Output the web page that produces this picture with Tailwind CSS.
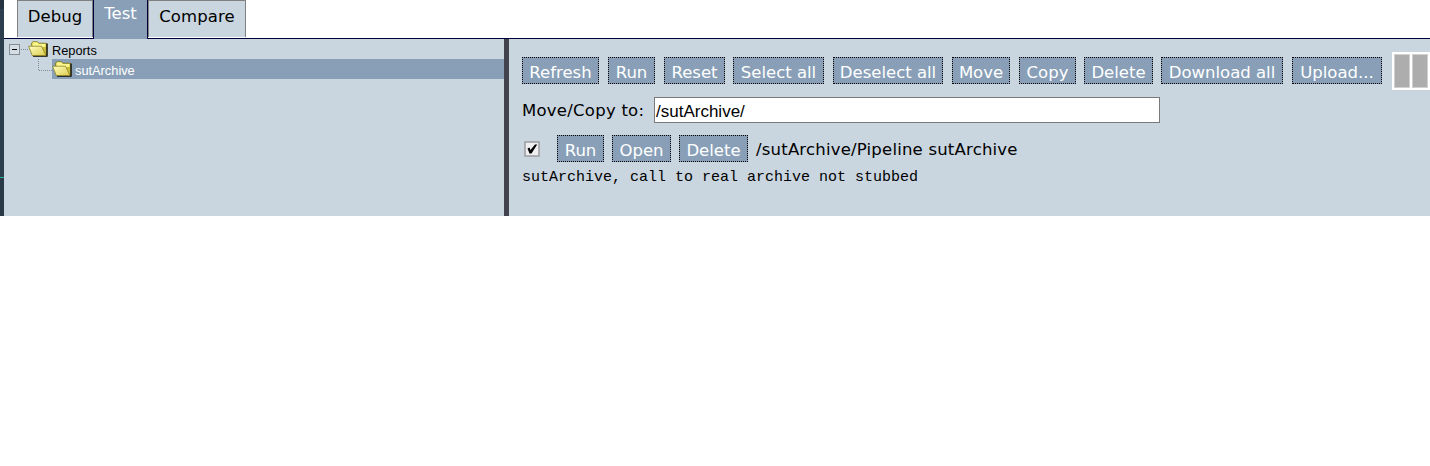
<!DOCTYPE html>
<html lang="en"><head><meta charset="utf-8"><title>Test reports</title>
<script src="https://cdn.jsdelivr.net/npm/@tailwindcss/browser@4"></script></head>
<body class="bg-white h-[466px] overflow-hidden font-['DejaVu_Sans',sans-serif] text-[16.5px] text-black">
<svg width="0" height="0" class="absolute"><defs>
<linearGradient id="g" x1="0" y1="0" x2="1" y2="1"><stop offset="0" stop-color="#ffffc0"/><stop offset="1" stop-color="#dccb50"/></linearGradient>
<symbol id="folder" viewBox="0 0 20 16"><path d="M3.500 4V2L5 .7H9.500L11 2.200H18L19 3V15H6.500Z" fill="#c9bd3a" stroke="#77701a" stroke-width=".7"/><path d="M18.300 2.500H19.700V15.700H5V14.500H18.300Z" fill="#111"/><path d="M4.500 4.500V2.200L5.500 1.300H9.200L10.700 3H17.500V6H5Z" fill="#fbf78f"/><path d="M.6 5.200H13.500L18 14.500H4.200Z" fill="url(#g)" stroke="#8b8123" stroke-width=".8"/></symbol>
</defs></svg>
<div class="flex h-[216px]">
<aside class="w-1 shrink-0 bg-[#2d3e4f] flex flex-col"><div class="h-[9px] bg-[#263442]"></div><div class="h-[168px]"></div><div class="h-px shrink-0 bg-[#1fae96]"></div><div class="flex-1 bg-[#2b3946]"></div></aside>
<div class="flex-1 min-w-0 flex flex-col">
<nav class="h-[39px] shrink-0 border-b border-[#000038] pl-[13px] flex leading-6">
<div class="w-[76px] h-[37px] bg-[#c9d5df] border-x border-t border-[#808080] pt-[4px] text-center">Debug</div>
<div class="w-[55px] h-[39px] bg-[#889fb7] border-x border-[#000038] pt-[2px] text-center text-white">Test</div>
<div class="w-[98px] h-[37px] bg-[#c9d5df] border-x border-t border-[#808080] pt-[4px] text-center tracking-[0.1px]">Compare</div>
</nav>
<main class="flex-1 flex bg-[#c9d5df]">
<section class="w-[500px] font-['Liberation_Sans',sans-serif] text-[12.8px] leading-5">
<div class="h-5 flex items-center pl-[5px]"><svg width="20" height="20"><rect x=".5" y="5.500" width="10" height="10" fill="#d4dce4" stroke="#858b92"/><path d="M3 10.500h5" stroke="#000"/><path d="M12 10.500h8" stroke="#858b92" stroke-dasharray="1 1"/></svg><svg width="20" height="16" class="-ml-px"><use href="#folder"/></svg><span class="ml-1 pt-[4px]">Reports</span></div>
<div class="h-5 flex"><svg width="48" height="20"><path d="M34.500 0v11.500H48" fill="none" stroke="#858b92" stroke-dasharray="1 1"/></svg><div class="flex-1 bg-[#889fb7] text-white flex items-center"><svg width="20" height="16"><use href="#folder"/></svg><span class="ml-[3px] pt-[4px]">sutArchive</span></div></div>
</section>
<div class="w-[5px] bg-[#42424f]"></div>
<section class="flex-1 min-w-0 pl-[13px] pt-[13px]">
<div class="flex h-[38px] items-start text-white leading-[24px] text-center whitespace-nowrap">
<button class="w-[77px] h-[27px] mt-[5px] mr-[9px] pt-[3px] bg-[#889fb7] border border-dotted border-black">Refresh</button>
<button class="w-[47px] h-[27px] mt-[5px] mr-[9px] pt-[3px] bg-[#889fb7] border border-dotted border-black">Run</button>
<button class="w-[61px] h-[27px] mt-[5px] mr-[8px] pt-[3px] bg-[#889fb7] border border-dotted border-black">Reset</button>
<button class="w-[91px] h-[27px] mt-[5px] mr-[9px] pt-[3px] bg-[#889fb7] border border-dotted border-black">Select all</button>
<button class="w-[110px] h-[27px] mt-[5px] mr-[9px] pt-[3px] bg-[#889fb7] border border-dotted border-black">Deselect all</button>
<button class="w-[58px] h-[27px] mt-[5px] mr-[9px] pt-[3px] bg-[#889fb7] border border-dotted border-black">Move</button>
<button class="w-[57px] h-[27px] mt-[5px] mr-[8px] pt-[3px] bg-[#889fb7] border border-dotted border-black">Copy</button>
<button class="w-[69px] h-[27px] mt-[5px] mr-[8px] pt-[3px] bg-[#889fb7] border border-dotted border-black">Delete</button>
<button class="w-[122px] h-[27px] mt-[5px] mr-[9px] pt-[3px] bg-[#889fb7] border border-dotted border-black">Download all</button>
<button class="w-[90px] h-[27px] mt-[5px] mr-[10px] pt-[3px] bg-[#889fb7] border border-dotted border-black">Upload...</button>
<div class="w-[38px] h-[38px] shrink-0 bg-white pl-[2px] pt-[2px] flex gap-[2px]"><div class="w-[16px] h-[34px] bg-[#adadad] border border-[#d0d0d0]"></div><div class="w-[16px] h-[34px] bg-[#adadad] border border-[#d0d0d0]"></div></div>
</div>
<div class="flex h-[26px] mt-[7px] items-center"><label class="w-[132px] pt-[3px] tracking-[0.25px] whitespace-nowrap">Move/Copy to:</label><div class="w-[506px] h-[26px] bg-white border border-[#7a7a7a] pl-[1px] leading-[27px] font-['Liberation_Sans',sans-serif] text-[17px]">/sutArchive/</div></div>
<div class="flex h-[27px] mt-[12px] items-center text-white leading-[24px]">
<svg width="16" height="16" class="ml-[2px] mr-[17px]"><rect x="1" y="1" width="14" height="14" fill="#efeff1" stroke="#9c9ca0" stroke-width="1.500"/><path d="M3.500 7.500l2-1 1 2.500 4.500-5.500h2.200L7.500 12.500H5.500Z" fill="#000"/></svg>
<button class="w-[47px] h-[27px] mr-[8px] pt-[3px] bg-[#889fb7] border border-dotted border-black">Run</button>
<button class="w-[59px] h-[27px] mr-[8px] pt-[3px] bg-[#889fb7] border border-dotted border-black">Open</button>
<button class="w-[69px] h-[27px] mr-[8px] pt-[3px] bg-[#889fb7] border border-dotted border-black">Delete</button>
<span class="text-black pt-[3px] tracking-[0.2px]">/sutArchive/Pipeline sutArchive</span></div>
<div class="mt-[8px] leading-4 font-['Liberation_Mono',monospace] text-[15px]">sutArchive, call to real archive not stubbed</div>
</section></main></div></div>
</body></html>
